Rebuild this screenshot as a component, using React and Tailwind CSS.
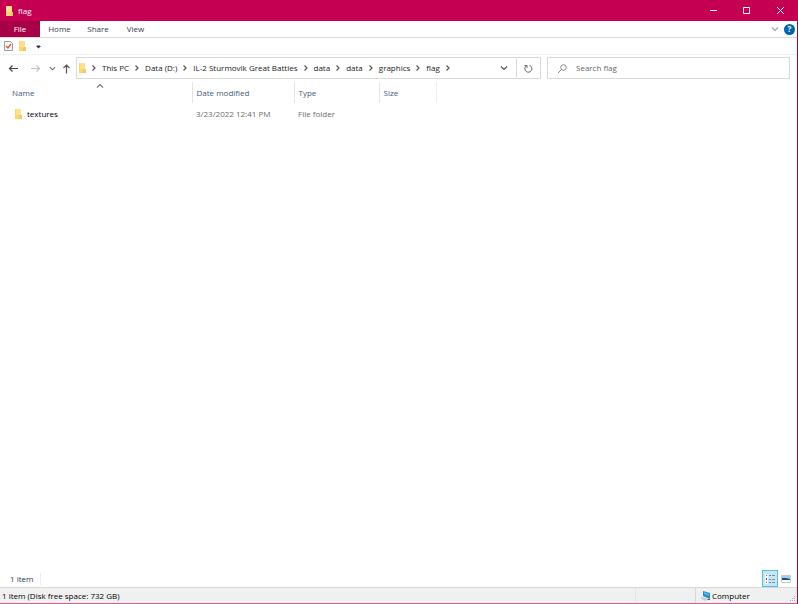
import { useState } from 'react';

const CRUMBS = ['This PC', 'Data (D:)', 'IL-2 Sturmovik Great Battles', 'data', 'data', 'graphics', 'flag'];

const FILES = [{ name: 'textures', modified: '3/23/2022 12:41 PM', type: 'File folder', size: '' }];

function FolderIcon({ className }) {
  return (
    <svg viewBox="0 0 7 10" className={className} aria-hidden="true">
      <path d="M0 0h5v6l2 1v3H0z" fill="#f8d775" />
      <path d="M1 0h5v6H1z" fill="#fde08a" />
      <path d="M5 6h2v4H3z" fill="#f3cb62" />
      <path d="M0 0h1v10H0z" fill="#f4d47c" />
    </svg>
  );
}

function Chevron({ direction = 'right', className, color = '#555555' }) {
  const paths = {
    right: 'M2.5 1.5L5 4 2.5 6.5',
    down: 'M1 2.5l3 3 3-3',
    up: 'M1 5.5l3-3 3 3'
  };
  return (
    <svg viewBox="0 0 8 8" className={className} fill="none" stroke={color} strokeWidth="1.2" aria-hidden="true">
      <path d={paths[direction]} />
    </svg>
  );
}

function Arrow({ direction, color }) {
  const paths = {
    left: 'M1 5.5h9M4.5 2.5l-3 3 3 3',
    right: 'M1 5.5h9M6.5 2.5l3 3-3 3',
    up: 'M5.5 10.5v-9M2.5 5l3-3 3 3'
  };
  return (
    <svg viewBox="0 0 11 11" className="h-[11px] w-[11px]" fill="none" stroke={color} strokeWidth="1.2" aria-hidden="true">
      <path d={paths[direction]} />
    </svg>
  );
}

function TitleBar() {
  return (
    <header className="flex h-[21px] items-center bg-[#c50052] pr-px pl-[6px] text-white">
      <FolderIcon className="mr-[5px] h-[10px] w-[7px]" />
      <h1 className="flex-1">flag</h1>
      <button type="button" aria-label="Minimize" className="flex h-full w-[33px] items-center justify-center">
        <svg viewBox="0 0 7 7" className="h-[7px] w-[7px]" stroke="white"><path d="M0 3.5h7" /></svg>
      </button>
      <button type="button" aria-label="Maximize" className="flex h-full w-[33px] items-center justify-center">
        <svg viewBox="0 0 7 7" className="h-[7px] w-[7px]" stroke="white" fill="none"><path d="M.5.5h6v6h-6z" /></svg>
      </button>
      <button type="button" aria-label="Close" className="flex h-full w-[34px] items-center justify-center">
        <svg viewBox="0 0 7 7" className="h-[7px] w-[7px]" stroke="white"><path d="M0 0l7 7M7 0L0 7" /></svg>
      </button>
    </header>
  );
}

function Ribbon() {
  return (
    <nav className="flex h-[17px] items-stretch border-b border-[#dadada] text-[#3b3b4b]">
      <button type="button" className="w-[40px] bg-[#a80048] text-white">File</button>
      <button type="button" className="w-[39px]">Home</button>
      <button type="button" className="w-[38px]">Share</button>
      <button type="button" className="w-[37px]">View</button>
      <div className="ml-auto flex items-center gap-[5px] pr-[2px]">
        <button type="button" aria-label="Expand the ribbon">
          <Chevron direction="down" className="h-[8px] w-[8px]" color="#a5a5a5" />
        </button>
        <button
          type="button"
          aria-label="Help"
          className="flex h-[11px] w-[11px] items-center justify-center rounded-full bg-[#0063b1] font-bold text-white"
        >
          ?
        </button>
      </div>
    </nav>
  );
}

function QuickAccess() {
  return (
    <div className="flex h-[17px] items-center border-b border-[#f1f1f1] pl-[4px]">
      <button type="button" aria-label="Properties">
        <svg viewBox="0 0 9 10" className="h-[10px] w-[9px]" fill="none" aria-hidden="true">
          <path d="M.5.5h6l2 2v7h-8z" fill="#fbfbfb" stroke="#9b9b9b" />
          <path d="M2 5l2 2 3-4" stroke="#e35322" strokeWidth="1.3" />
        </svg>
      </button>
      <button type="button" aria-label="New folder" className="ml-[6px]">
        <FolderIcon className="h-[10px] w-[7px]" />
      </button>
      <button type="button" aria-label="Customize Quick Access Toolbar" className="ml-[10px]">
        <svg viewBox="0 0 5 5" className="h-[5px] w-[5px]" aria-hidden="true">
          <path d="M1 1h3v1H1z" fill="#999999" />
          <path d="M0 2h5L2.5 4.5z" fill="#333333" />
        </svg>
      </button>
    </div>
  );
}

function AddressBar({ query, onQueryChange }) {
  return (
    <div className="flex items-stretch pt-[2px] pr-[7px]">
      <div className="flex w-[76px] shrink-0 items-center pl-[8px]">
        <button type="button" aria-label="Back"><Arrow direction="left" color="#444444" /></button>
        <button type="button" aria-label="Forward" className="ml-[11px]"><Arrow direction="right" color="#c4c4c4" /></button>
        <button type="button" aria-label="Recent locations" className="ml-[8px]">
          <Chevron direction="down" className="h-[7px] w-[7px]" color="#666666" />
        </button>
        <button type="button" aria-label="Up" className="ml-[5px]"><Arrow direction="up" color="#555555" /></button>
      </div>
      <div className="flex h-[22px] flex-1 items-stretch border border-[#d9d9d9]">
        <FolderIcon className="ml-[2px] h-[10px] w-[7px] shrink-0 self-center" />
        <ol className="flex items-center whitespace-nowrap text-[#222222]">
          {CRUMBS.map((crumb, index) => (
            <li key={index} className="flex items-center">
              <span className="flex w-[16px] justify-center"><Chevron className="h-[8px] w-[8px]" /></span>
              <a href="#">{crumb}</a>
            </li>
          ))}
          <li className="flex w-[16px] justify-center"><Chevron className="h-[8px] w-[8px]" /></li>
        </ol>
        <button type="button" aria-label="Previous locations" className="ml-auto flex w-[24px] items-center justify-center">
          <Chevron direction="down" className="h-[8px] w-[8px]" />
        </button>
        <button type="button" aria-label="Refresh" className="flex w-[24px] items-center justify-center border-l border-[#d9d9d9]">
          <svg viewBox="0 0 9 9" className="h-[9px] w-[9px]" fill="none" stroke="#666666" aria-hidden="true">
            <path d="M5.5 1.4A3.5 3.5 0 1 1 2.2 2M.5 1.5h2.5V4" />
          </svg>
        </button>
      </div>
      <label className="ml-[6px] flex h-[22px] w-[243px] items-center border border-[#d9d9d9] pl-[10px]">
        <svg viewBox="0 0 9 9" className="h-[9px] w-[9px] shrink-0" fill="none" stroke="#888888" aria-hidden="true">
          <path d="M0 9l3.5-3.5" />
          <circle cx="5.5" cy="3.5" r="2.8" />
        </svg>
        <input
          type="text"
          aria-label="Search flag"
          placeholder="Search flag"
          value={query}
          onChange={(event) => onQueryChange(event.target.value)}
          className="ml-[9px] min-w-0 flex-1 outline-none placeholder:text-[#666666]"
        />
      </label>
    </div>
  );
}

function FileTable({ files }) {
  return (
    <table className="mt-[3px] w-full table-fixed text-left">
      <thead className="text-[#42597d]">
        <tr className="h-[19px]">
          <th className="w-[192px] border-r border-[#e5e5e5] p-0 font-normal">
            <button type="button" className="flex w-full items-center pl-[12px] text-left">
              <span className="w-[84px]">Name</span>
              <Chevron direction="up" className="mb-[13px] h-[8px] w-[8px]" color="#777777" />
            </button>
          </th>
          <th className="w-[102px] border-r border-[#e5e5e5] p-0 pl-[4px] font-normal">Date modified</th>
          <th className="w-[85px] border-r border-[#e5e5e5] p-0 pl-[4px] font-normal">Type</th>
          <th className="w-[57px] border-r border-[#eeeeee] p-0 pl-[4px] font-normal">Size</th>
          <th className="p-0" />
        </tr>
      </thead>
      <tbody className="text-[#6d6d6d]">
        {files.map((file) => (
          <tr key={file.name} className="h-[22px]">
            <td className="p-0 pl-[15px] text-black">
              <span className="flex items-center">
                <FolderIcon className="mr-[5px] h-[10px] w-[7px]" />
                {file.name}
              </span>
            </td>
            <td className="p-0 pl-[4px]">{file.modified}</td>
            <td className="p-0 pl-[4px]">{file.type}</td>
            <td className="p-0 pl-[4px]">{file.size}</td>
            <td className="p-0" />
          </tr>
        ))}
      </tbody>
    </table>
  );
}

function ViewBar({ view, onViewChange }) {
  return (
    <div className="flex h-[17px] items-center pr-[6px] pl-[10px] text-[#1e395b]">
      <span className="border-r border-[#eeeeee] pr-[7px]">1 item</span>
      <button
        type="button"
        aria-label="Details"
        aria-pressed={view === 'details'}
        onClick={() => onViewChange('details')}
        className="ml-auto flex h-[17px] w-[16px] items-center justify-center border border-[#5db9e2] bg-[#c5e8f7]"
      >
        <svg viewBox="0 0 10 10" className="h-[10px] w-[10px]" aria-hidden="true">
          <path d="M0 0h3v10H0z" fill="#ffffff" />
          <path d="M1 1h1v1H1zM1 8h1v1H1z" fill="#666666" />
          <path d="M1 4h1v2H1z" fill="#c0392b" />
          <path d="M4 1h2v1H4zM7 1h3v1H7zM4 5h2v1H4zM7 5h3v1H7zM4 8h2v1H4zM7 8h3v1H7z" fill="#7e8e99" />
        </svg>
      </button>
      <button
        type="button"
        aria-label="Large icons"
        aria-pressed={view === 'icons'}
        onClick={() => onViewChange('icons')}
        className="ml-[3px]"
      >
        <svg viewBox="0 0 10 8" className="h-[8px] w-[10px]" aria-hidden="true">
          <path d="M.5.5h9v7h-9z" fill="#ffffff" stroke="#c6c6c6" />
          <path d="M1 1h8v3H1z" fill="#a9cdea" />
          <path d="M1 3h4l4 1v1H1z" fill="#174f80" />
        </svg>
      </button>
    </div>
  );
}

function StatusBar() {
  return (
    <footer className="flex h-[17px] items-stretch border-t border-b border-t-[#d7d7d7] border-b-[#d65f92] bg-[#f0f0f0] text-black">
      <span className="flex flex-1 items-center pl-[2px]">1 item (Disk free space: 732 GB)</span>
      <span className="w-[60px] border-l border-[#e5e5e5]" />
      <span className="flex w-[102px] items-center border-l border-[#d7d7d7] pl-[4px]">
        <svg viewBox="0 0 11 10" className="mr-px h-[10px] w-[11px]" aria-hidden="true">
          <path d="M3 0l7 2v6L3 5z" fill="#258bc8" />
          <path d="M4 1l5 2v2L4 3z" fill="#5db9e8" />
          <path d="M0 7l3-1 5 2-3 2z" fill="#c7cdd1" />
          <path d="M8 8h2v1H7z" fill="#55636d" />
        </svg>
        Computer
        <svg viewBox="0 0 7 7" className="mr-px ml-auto h-[7px] w-[7px] self-end" fill="#aaaaaa" aria-hidden="true">
          <path d="M5 0h1v1H5zM3 2h1v1H3zM5 2h1v1H5zM1 4h1v1H1zM3 4h1v1H3zM5 4h1v1H5z" />
        </svg>
      </span>
    </footer>
  );
}

export default function App() {
  const [query, setQuery] = useState('');
  const [view, setView] = useState('details');
  const files = FILES.filter((file) => file.name.includes(query.toLowerCase()));

  return (
    <div className="flex min-h-screen flex-col bg-white font-['Open_Sans','Noto_Sans',sans-serif] text-[8px] leading-[12px]">
      <TitleBar />
      <div className="flex flex-1 flex-col border-r border-[#a80048]">
        <Ribbon />
        <QuickAccess />
        <AddressBar query={query} onQueryChange={setQuery} />
        <main className="flex-1">
          <FileTable files={files} />
        </main>
        <ViewBar view={view} onViewChange={setView} />
        <StatusBar />
      </div>
    </div>
  );
}
